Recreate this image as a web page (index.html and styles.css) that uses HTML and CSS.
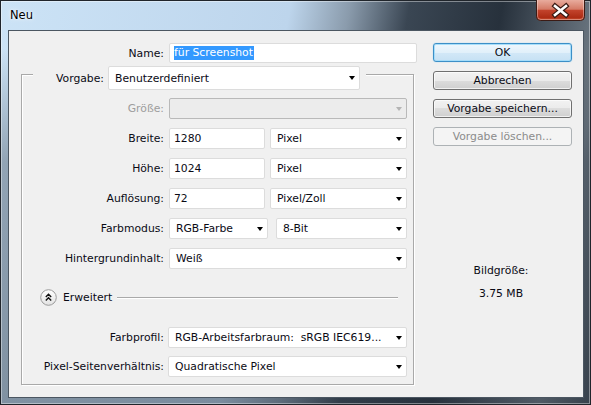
FILE: index.html
```html
<!DOCTYPE html>
<html lang="de">
<head>
<meta charset="utf-8">
<title>Neu</title>
<link rel="stylesheet" href="styles.css">
</head>
<body>
<div class="window">
  <div class="titlebar">
    <span class="title">Neu</span>
    <svg class="close" width="49" height="21" viewBox="0 0 49 21">
      <defs>
        <linearGradient id="cg" x1="0" y1="0" x2="0" y2="1">
          <stop offset="0" stop-color="#e8ab9d"/>
          <stop offset="0.45" stop-color="#d47a66"/>
          <stop offset="0.5" stop-color="#c2432c"/>
          <stop offset="0.85" stop-color="#ad2c14"/>
          <stop offset="1" stop-color="#cf5a3b"/>
        </linearGradient>
      </defs>
      <path d="M0.5 0 V16.5 Q0.5 20.5 4.5 20.5 H44.5 Q48.5 20.5 48.5 16.5 V0" fill="url(#cg)" stroke="#3b1b15"/>
      <path d="M1.5 0 V16 Q1.5 19.5 5 19.5 H44 Q47.5 19.5 47.5 16 V0" fill="none" stroke="rgba(255,255,255,0.35)"/>
      <path d="M19 6 L30 15 M30 6 L19 15" stroke="#3a1a14" stroke-width="5" stroke-linecap="square" fill="none"/>
      <path d="M19 6 L30 15 M30 6 L19 15" stroke="#ffffff" stroke-width="2.6" stroke-linecap="square" fill="none"/>
    </svg>
  </div>
  <div class="content">
    <div class="form">
      <div class="name-row">
        <span class="lbl name-lbl">Name:</span>
        <div class="field name-field"><span class="hl">für Screenshot</span></div>
      </div>
      <div class="group">
        <div class="group-head">
          <span class="lbl head-lbl">Vorgabe:</span>
          <div class="field select head-select"><span>Benutzerdefiniert</span><i class="arr"></i></div>
        </div>
        <div class="rows">
          <span class="lbl dis">Größe:</span>
          <div class="field select disabled"><span></span><i class="arr"></i></div>

          <span class="lbl">Breite:</span>
          <div class="pair">
            <div class="field num"><span>1280</span></div>
            <div class="field select grow"><span>Pixel</span><i class="arr"></i></div>
          </div>

          <span class="lbl">Höhe:</span>
          <div class="pair">
            <div class="field num"><span>1024</span></div>
            <div class="field select grow"><span>Pixel</span><i class="arr"></i></div>
          </div>

          <span class="lbl">Auflösung:</span>
          <div class="pair">
            <div class="field num"><span>72</span></div>
            <div class="field select grow"><span>Pixel/Zoll</span><i class="arr"></i></div>
          </div>

          <span class="lbl">Farbmodus:</span>
          <div class="pair wide-gap">
            <div class="field select mode"><span>RGB-Farbe</span><i class="arr"></i></div>
            <div class="field select grow"><span>8-Bit</span><i class="arr"></i></div>
          </div>

          <span class="lbl">Hintergrundinhalt:</span>
          <div class="field select"><span>Weiß</span><i class="arr"></i></div>
        </div>

        <div class="adv">
          <svg class="adv-icon" width="17" height="17" viewBox="0 0 17 17">
            <defs>
              <linearGradient id="ag" x1="0" y1="0" x2="0" y2="1">
                <stop offset="0" stop-color="#ffffff"/>
                <stop offset="1" stop-color="#e2e2e2"/>
              </linearGradient>
            </defs>
            <circle cx="8.5" cy="8.5" r="7.8" fill="url(#ag)" stroke="#9a9a9a"/>
            <path d="M5.8 8 L8.5 5.3 L11.2 8 M5.8 11.5 L8.5 8.8 L11.2 11.5" fill="none" stroke="#111" stroke-width="1.4"/>
          </svg>
          <span class="adv-text">Erweitert</span>
          <span class="adv-line"></span>
        </div>

        <div class="rows rows2">
          <span class="lbl">Farbprofil:</span>
          <div class="field select"><span>RGB-Arbeitsfarbraum:&nbsp; sRGB IEC619...</span><i class="arr"></i></div>

          <span class="lbl">Pixel-Seitenverhältnis:</span>
          <div class="field select"><span>Quadratische Pixel</span><i class="arr"></i></div>
        </div>
      </div>
    </div>
    <div class="side">
      <div class="btn default">OK</div>
      <div class="btn">Abbrechen</div>
      <div class="btn">Vorgabe speichern...</div>
      <div class="btn disabled">Vorgabe löschen...</div>
      <div class="size-info">
        <div class="size-lbl">Bildgröße:</div>
        <div class="size-val">3.75 MB</div>
      </div>
    </div>
  </div>
</div>
</body>
</html>
```

FILE: styles.css
```css
* { box-sizing: border-box; }
html, body { margin: 0; padding: 0; }
body {
  width: 591px;
  height: 405px;
  overflow: hidden;
  font-family: "DejaVu Sans", Tahoma, sans-serif;
  font-size: 10.8px;
  color: #0a0a14;
  background: #000;
}

.window {
  width: 591px;
  height: 405px;
  display: flex;
  flex-direction: column;
  background:
    linear-gradient(to bottom, rgba(40, 50, 62, 0) 0%, rgba(40, 50, 62, 0) 12%, rgba(40, 50, 62, 0.35) 40%, rgba(40, 50, 62, 0.45) 100%),
    linear-gradient(100deg, #cce3f6 0%, #bdd5ec 44%, #8a9bac 53%, #3a4653 62%, #27313c 76%, #56616c 86%, #717c86 92%, #434d57 100%);
  box-shadow: inset 0 0 0 1px #20252b, inset 0 0 0 2px rgba(255, 255, 255, 0.4);
}

.titlebar {
  height: 30px;
  flex: none;
  display: flex;
  justify-content: space-between;
  align-items: flex-start;
  padding: 0 6px 0 10px;
}
.title {
  margin-top: 8px;
  font-size: 11.5px;
  color: #000;
  text-shadow: 0 0 5px rgba(255, 255, 255, 0.9), 0 0 2px rgba(255, 255, 255, 0.9);
}
.close { display: block; }

.content {
  flex: 1;
  margin: 0 7px 7px 8px;
  border: 1px solid #4b5661;
  background: #f0f0f0;
  display: flex;
  padding-top: 12px;
}

.form { width: 424px; flex: none; }

.lbl {
  text-align: right;
  white-space: nowrap;
  align-self: center;
}
.dis { color: #9d9d9d; }

.field {
  height: 21px;
  background: #fff;
  border: 1px solid #dcdcdc;
  border-radius: 2px;
  display: flex;
  align-items: center;
  padding: 0 4px;
  white-space: nowrap;
  overflow: hidden;
}
.select {
  justify-content: space-between;
  padding: 0 4px 0 6px;
}
.arr {
  flex: none;
  width: 0;
  height: 0;
  border-left: 3.5px solid transparent;
  border-right: 3.5px solid transparent;
  border-top: 4px solid #000;
}
.disabled {
  background: #ececec;
  border-color: #b9b9b9;
}
.disabled .arr { border-top-color: #b4b4b4; }

.name-row {
  display: flex;
  align-items: center;
}
.name-lbl { width: 155px; margin-right: 5px; }
.name-field { width: 248px; height: 20px; }
.hl {
  background: #3399ff;
  color: #fff;
  line-height: 14px;
  padding-right: 1px;
}

.group {
  margin: 11px 0 0 12px;
  width: 393px;
  border: 1px solid #a9a9a9;
  box-shadow: 1px 1px 0 #fff, inset 1px 1px 0 #fff;
  padding-bottom: 7px;
}
.group-head {
  margin: -9px 0 0 11px;
  display: flex;
  align-items: center;
  width: fit-content;
  background: #f0f0f0;
  padding-right: 6px;
}
.head-lbl { width: 71px; margin-right: 4px; }
.head-select { width: 252px; height: 24px; }

.rows {
  display: grid;
  grid-template-columns: 142px 238px;
  column-gap: 5px;
  row-gap: 9px;
  margin-top: 8px;
}
.rows2 {
  grid-template-columns: 142px 239px;
  column-gap: 4px;
  row-gap: 8px;
  margin-top: 21px;
}

.pair { display: flex; gap: 5px; }
.pair.wide-gap { gap: 8px; }
.num { width: 96px; flex: none; }
.mode { width: 99px; flex: none; }
.grow { flex: 1; }

.adv {
  display: flex;
  align-items: center;
  margin-top: 20px;
  padding-left: 18px;
  height: 17px;
}
.adv-icon { display: block; flex: none; }
.adv-text { margin-left: 6px; }
.adv-line {
  flex: 1;
  margin: 1px 15px 0 5px;
  border-top: 1px solid #a9a9a9;
  border-bottom: 1px solid #fff;
}

.side {
  width: 139px;
  flex: none;
  display: flex;
  flex-direction: column;
  gap: 9px;
}
.btn {
  height: 19px;
  border: 1px solid #707070;
  border-radius: 3px;
  background: linear-gradient(#f2f2f2 0%, #ebebeb 50%, #dddddd 50%, #cfcfcf 100%);
  box-shadow: inset 0 0 0 1px rgba(255, 255, 255, 0.7);
  text-align: center;
  line-height: 17px;
  white-space: nowrap;
}
.btn.default {
  border-color: #3c8fc7;
  background: linear-gradient(#eef7fd 0%, #e1f0fa 50%, #d2e8f7 50%, #c6e1f4 100%);
  box-shadow: inset 0 0 0 1px rgba(160, 220, 250, 0.9), 0 0 1px #6cc3f2;
}
.btn.disabled {
  border-color: #adb2b5;
  background: #f4f4f4;
  box-shadow: none;
  color: #8b8b8b;
}

.size-info {
  margin-top: 109px;
  padding-right: 3px;
  text-align: center;
  line-height: 13px;
}
.size-val { margin-top: 10px; }
```
